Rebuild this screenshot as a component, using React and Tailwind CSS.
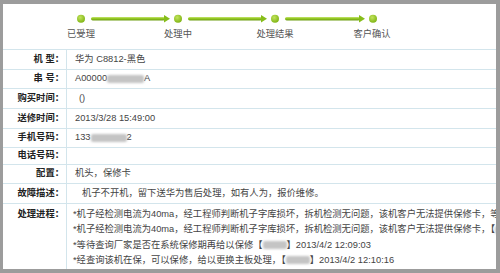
import React from "react";

const steps = ["已受理", "处理中", "处理结果", "客户确认"];
const dots = [78, 175, 272, 370];

function Blur({ className }) {
  return <span className={`inline-block h-[8px] rounded-[2px] bg-[#c4c4c4] blur-[1.2px] align-middle ${className}`} />;
}

function Stepper() {
  return (
    <div className="h-[45px] relative">
      <svg width="493" height="24" className="block">
        <defs>
          <linearGradient id="bar" x1="0" y1="0" x2="0" y2="1">
            <stop offset="0" stopColor="#c6e66e" />
            <stop offset="0.5" stopColor="#8fc41f" />
            <stop offset="1" stopColor="#6e9e12" />
          </linearGradient>
          <radialGradient id="dot" cx="0.4" cy="0.35" r="0.7">
            <stop offset="0" stopColor="#c2e45c" />
            <stop offset="1" stopColor="#7cb212" />
          </radialGradient>
        </defs>
        {dots.slice(0, 3).map((x, i) => (
          <g key={i}>
            <rect x={x + 10} y="13" width={dots[i + 1] - x - 23} height="3.4" rx="1.7" fill="url(#bar)" />
            <path d={`M${dots[i + 1] - 14} 11 L${dots[i + 1] - 8} 14.7 L${dots[i + 1] - 14} 18.4 Z`} fill="#86bd1a" />
          </g>
        ))}
        {dots.map((x) => (
          <circle key={x} cx={x} cy="14.7" r="4" fill="url(#dot)" />
        ))}
      </svg>
      <div className="flex ml-[29.5px] text-[9.3px] leading-[12px] text-[#555]">
        {steps.map((s) => (
          <div key={s} className="w-[97px] text-center">{s}</div>
        ))}
      </div>
    </div>
  );
}

function Row({ label, h, children }) {
  return (
    <div className={`flex border-t border-[#d3e5ec] ${h}`}>
      <div className="w-[64px] shrink-0 border-r border-[#d3e5ec] text-right pr-[2px] font-bold text-[#222] flex items-center justify-end">
        {label}
      </div>
      <div className="pl-[8px] flex items-center text-[#444] whitespace-nowrap">{children}</div>
    </div>
  );
}

export default function App() {
  return (
    <div className="w-[500px] h-[273px] bg-[#9c9c9c] pt-[4px] pl-[3px] pr-[4px] pb-[4px] font-['Liberation_Sans','Noto_Sans_CJK_SC',sans-serif] text-[9.3px]">
      <div className="bg-white h-full flex flex-col overflow-hidden">
        <Stepper />
        <Row label="机 型：" h="h-[20px]">华为 C8812-黑色</Row>
        <Row label="串 号：" h="h-[19px]">
          A00000<Blur className="w-[37px]" />A
        </Row>
        <Row label="购买时间：" h="h-[20px]">
          <span className="ml-[4px]">()</span>
        </Row>
        <Row label="送修时间：" h="h-[20px]">2013/3/28 15:49:00</Row>
        <Row label="手机号码：" h="h-[19px]">
          133<Blur className="w-[36px]" />2
        </Row>
        <Row label="电话号码：" h="h-[17px]" />
        <Row label="配置：" h="h-[19px]">机头，保修卡</Row>
        <Row label="故障描述：" h="h-[20px]">
          <span className="ml-[7px]">机子不开机，留下送华为售后处理，如有人为，报价维修。</span>
        </Row>
        <div className="flex flex-1 border-t border-[#d3e5ec] min-h-0">
          <div className="w-[64px] shrink-0 border-r border-[#d3e5ec] text-right pr-[2px] pt-[3px] font-bold text-[#222] leading-[15.3px]">
            处理进程：
          </div>
          <div className="pl-[6px] pt-[3px] text-[#444] leading-[15.3px] whitespace-nowrap overflow-hidden">
            <div>*机子经检测电流为40ma，经工程师判断机子字库损坏，拆机检测无问题，该机客户无法提供保修卡，等待厂家确认</div>
            <div>
              *机子经检测电流为40ma，经工程师判断机子字库损坏，拆机检测无问题，该机客户无法提供保修卡，【<Blur className="w-[30px]" />】
            </div>
            <div>
              *等待查询厂家是否在系统保修期再给以保修【<Blur className="w-[24px]" />】2013/4/2 12:09:03
            </div>
            <div>
              *经查询该机在保，可以保修，给以更换主板处理，【<Blur className="w-[24px]" />】2013/4/2 12:10:16
            </div>
            <div>*客户已取机，机器已修好，【<Blur className="w-[24px]" />】2013/4/3 10:22:41</div>
          </div>
        </div>
      </div>
    </div>
  );
}
